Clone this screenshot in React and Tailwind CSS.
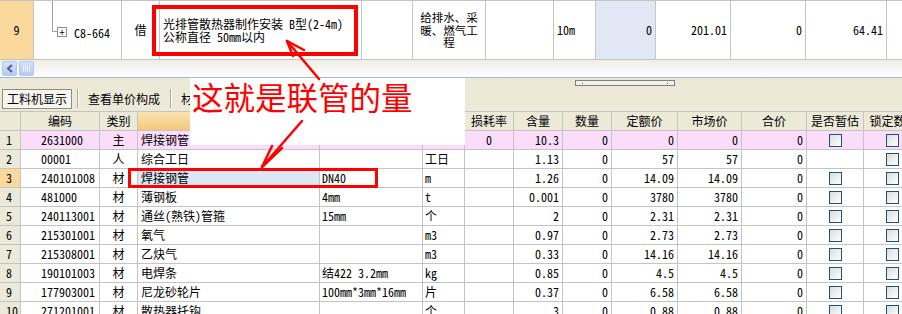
import React from 'react';

const FONT = "font-['Noto_Sans_Mono_CJK_SC','Noto_Sans_CJK_SC',sans-serif]";

const W = ['w-[21px]', 'w-[79px]', 'w-[38px]', 'w-[182px]', 'w-[103px]', 'w-[42px]', 'w-[49px]', 'w-[49px]', 'w-[49px]', 'w-[66px]', 'w-[64px]', 'w-[65px]', 'w-[57px]', 'w-[60px]'];

const headers = ['', '编码', '类别', '名称', '规格', '单位', '损耗率', '含量', '数量', '定额价', '市场价', '合价', '是否暂估', '锁定数量'];

// [code, type, name, spec, unit, loss, qty, num, quota, market, total, est]
const rows = [
    ['2631000', '主', '焊接钢管', '', '', '0', '10.3', '0', '0', '0', '0', true],
    ['00001', '人', '综合工日', '', '工日', '', '1.13', '0', '57', '57', '0', false],
    ['240101008', '材', '焊接钢管', 'DN40', 'm', '', '1.26', '0', '14.09', '14.09', '0', true],
    ['481000', '材', '薄钢板', '4mm', 't', '', '0.001', '0', '3780', '3780', '0', true],
    ['240113001', '材', '通丝(熟铁)管箍', '15mm', '个', '', '2', '0', '2.31', '2.31', '0', true],
    ['215301001', '材', '氧气', '', 'm3', '', '0.97', '0', '2.73', '2.73', '0', true],
    ['215308001', '材', '乙炔气', '', 'm3', '', '0.33', '0', '14.16', '14.16', '0', true],
    ['190101003', '材', '电焊条', '结422 3.2mm', 'kg', '', '0.85', '0', '4.5', '4.5', '0', true],
    ['177903001', '材', '尼龙砂轮片', '100mm*3mm*16mm', '片', '', '0.37', '0', '6.58', '6.58', '0', true],
    ['271201001', '材', '散热器托钩', '', '个', '', '3', '0', '0.88', '0.88', '0', true],
];

const box = 'flex items-center h-full shrink-0 border-r border-[#c4c4c4] overflow-hidden';
const cell = `${box} whitespace-nowrap`;

const Check = () => (
    <span className="block w-[13px] h-[13px] border border-[#1c5180] bg-linear-to-br from-[#dcdcd7] to-white"></span>
);

const App = () => {
    return (
        <div className={`relative w-[902px] h-[314px] overflow-hidden bg-white text-black text-[12px] ${FONT}`}>

            {/* upper grid, one row visible */}
            <div className="flex h-[60px] border-t border-b border-[#c4c4c4]">
                <div className={`${cell} w-[34px] justify-center bg-[#fbd89b]`}>9</div>
                <div className={`${cell} w-[88px] relative`}>
                    <span className="absolute left-[18px] top-0 w-px h-[31px] bg-[#a0a0a0]"></span>
                    <span className="absolute left-[18px] top-[30px] w-[5px] h-px bg-[#a0a0a0]"></span>
                    <span className="absolute left-[23px] top-[26px] w-[10px] h-[10px] border border-[#8c8c8c] bg-white flex items-center justify-center text-[10px] leading-none">+</span>
                    <span className="absolute left-[40px] top-[23px]">C8-664</span>
                </div>
                <div className={`${cell} w-[38px] justify-center`}>借</div>
                <div className={`${box} w-[202px] pl-[3px] leading-[13px]`}>
                    <div className="whitespace-nowrap">光排管散热器制作安装 B型(2-4m)<br />公称直径 50mm以内</div>
                </div>
                <div className={`${cell} w-[51px]`}></div>
                <div className={`${box} w-[73px] flex-col justify-center items-center leading-[12.5px] text-[11.5px]`}>
                    <div>给排水、采</div>
                    <div>暖、燃气工</div>
                    <div>程</div>
                </div>
                <div className={`${cell} w-[68px]`}></div>
                <div className={`${cell} w-[42px] pl-[3px]`}>10m</div>
                <div className={`${cell} w-[60px] justify-end pr-[3px] bg-[#dfe8f4]`}>0</div>
                <div className={`${cell} w-[75px] justify-end pr-[3px]`}>201.01</div>
                <div className={`${cell} w-[75px] justify-end pr-[3px]`}>0</div>
                <div className={`${cell} w-[81px] justify-end pr-[3px]`}>64.41</div>
                <div className={`${cell} w-[20px]`}></div>
            </div>

            {/* horizontal scrollbar */}
            <div className="flex items-center gap-[2px] h-[17px] pl-[2px] bg-linear-to-b from-[#eeede6] to-[#fefefe]">
                <div className="w-[15px] h-[15px] rounded-[2px] border border-[#b7c9f2] bg-linear-to-b from-[#d5e2fd] to-[#b6c9f4] flex items-center justify-center">
                    <svg width="8" height="9" viewBox="0 0 8 9"><path d="M6 1 L2 4.5 L6 8" stroke="#4d6185" strokeWidth="2" fill="none" /></svg>
                </div>
                <div className="w-[15px] h-[15px] rounded-[2px] border border-[#b7c9f2] bg-linear-to-b from-[#d5e2fd] to-[#b6c9f4] flex items-center justify-center gap-px">
                    <span className="w-px h-[6px] bg-[#eef3fd]"></span>
                    <span className="w-px h-[6px] bg-[#eef3fd]"></span>
                    <span className="w-px h-[6px] bg-[#eef3fd]"></span>
                    <span className="w-px h-[6px] bg-[#eef3fd]"></span>
                </div>
            </div>
            <div className="h-px bg-[#a9bad0]"></div>

            {/* splitter + toolbar */}
            <div className="bg-[#ece9d8]">
                <div className="h-[8px] pt-[2px]">
                    <div className="ml-[575px] w-[100px] h-[6px] border border-[#7f7f7f] bg-[#f3f1e8] flex items-center justify-between px-[6px]">
                        <span className="w-px h-px bg-[#555]"></span>
                        <span className="w-px h-px bg-[#555]"></span>
                    </div>
                </div>
                <div className="flex items-center h-[25px] pl-[2px]">
                    <div className="w-[70px] h-[20px] flex items-center justify-center border border-[#8f8c80] bg-[#f6f5f0]">工料机显示</div>
                    <div className="ml-[5px] w-px h-[19px] bg-[#aca899]"></div>
                    <div className="w-px h-[19px] bg-white"></div>
                    <div className="ml-[9px] w-[74px]">查看单价构成</div>
                    <div className="ml-[8px] w-px h-[19px] bg-[#aca899]"></div>
                    <div className="w-px h-[19px] bg-white"></div>
                    <div className="ml-[9px]">材料</div>
                </div>
            </div>

            {/* lower grid */}
            <div className="flex h-[20px] border-t border-b border-[#c4c4c4] bg-[#ece9d8]">
                {headers.map((h, i) => (
                    <div key={i} className={`${cell} ${W[i]} justify-center ${i === 3 ? 'bg-linear-to-b from-[#fbe3b0] to-[#f4c77c]' : ''}`}>{h}</div>
                ))}
            </div>
            {rows.map((r, idx) => (
                <div key={idx} className={`flex h-[19px] border-b border-[#c4c4c4] ${idx === 0 ? 'bg-[#fbdcfb]' : ''}`}>
                    <div className={`${cell} ${W[0]} pl-[6px] ${idx === 2 ? 'bg-[#fbd89b]' : 'bg-[#ece9d8]'}`}>{idx + 1}</div>
                    <div className={`${cell} ${W[1]} pl-[20px]`}>{r[0]}</div>
                    <div className={`${cell} ${W[2]} justify-center`}>{r[1]}</div>
                    <div className={`${cell} ${W[3]} pl-[3px] ${idx === 2 ? 'bg-[#dde7f3]' : ''}`}>{r[2]}</div>
                    <div className={`${cell} ${W[4]} pl-[2px]`}>{r[3]}</div>
                    <div className={`${cell} ${W[5]} pl-[2px]`}>{r[4]}</div>
                    <div className={`${cell} ${W[6]} justify-center`}>{r[5]}</div>
                    <div className={`${cell} ${W[7]} justify-end pr-[3px]`}>{r[6]}</div>
                    <div className={`${cell} ${W[8]} justify-end pr-[3px]`}>{r[7]}</div>
                    <div className={`${cell} ${W[9]} justify-end pr-[3px]`}>{r[8]}</div>
                    <div className={`${cell} ${W[10]} justify-end pr-[3px]`}>{r[9]}</div>
                    <div className={`${cell} ${W[11]} justify-end pr-[3px]`}>{r[10]}</div>
                    <div className={`${cell} ${W[12]} justify-center`}>{r[11] && <Check />}</div>
                    <div className={`${cell} ${W[13]} justify-start pl-[22px]`}><Check /></div>
                </div>
            ))}

            {/* annotations drawn over the screenshot */}
            <div className="absolute left-[152px] top-[5px] w-[206px] h-[51px] border-[4px] border-[#ff0000]"></div>
            <div className="absolute left-[128px] top-[168px] w-[250px] h-[20px] border-[3px] border-[#ff0000]"></div>
            <div className="absolute left-[190px] top-[78px] w-[275px] h-[67px] bg-white">
                <div className="pl-[2px] pt-px text-[31.5px] leading-[34px] text-[#ff0000] font-['Noto_Sans_CJK_SC',sans-serif]">这就是联管的量</div>
            </div>
            <svg className="absolute left-0 top-0 pointer-events-none" width="902" height="314" viewBox="0 0 902 314">
                <g stroke="#ff0000" strokeWidth="2.5" fill="none" strokeLinecap="round">
                    <path d="M319 79 L287 41" />
                    <path d="M287 41 L304 50" />
                    <path d="M287 41 L293 56" />
                    <path d="M302 121 L262 167" />
                    <path d="M262 167 L272 146" />
                    <path d="M262 167 L282 148" />
                </g>
            </svg>
        </div>
    );
};

export default App;
